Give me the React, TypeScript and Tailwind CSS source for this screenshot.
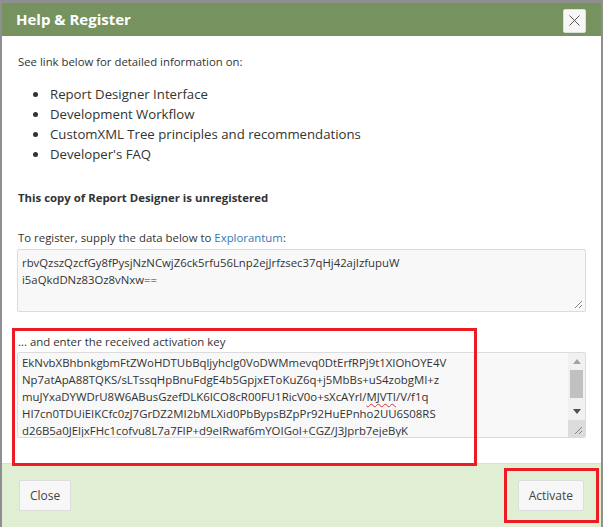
import React from "react";

const FONT = { fontFamily: '"Open Sans", "Noto Sans", Arial, sans-serif' };

const TOPICS = [
  "Report Designer Interface",
  "Development Workflow",
  "CustomXML Tree principles and recommendations",
  "Developer's FAQ",
];

const REQUEST_LINES = [
  "rbvQzszQzcfGy8fPysjNzNCwjZ6ck5rfu56Lnp2ejJrfzsec37qHj42ajIzfupuW",
  "i5aQkdDNz83Oz8vNxw==",
];

function ResizeGrip() {
  return (
    <svg width="9" height="9" viewBox="0 0 9 9" className="absolute right-[2px] bottom-[2px]">
      <line x1="1" y1="8" x2="8" y2="1" stroke="#777" strokeWidth="0.9" />
      <line x1="5" y1="8" x2="8" y2="5" stroke="#777" strokeWidth="0.9" />
    </svg>
  );
}

function Scrollbar() {
  return (
    <div className="absolute right-0 top-0 bottom-0 w-[17px] bg-[#f1f1f1] flex flex-col">
      <div className="h-[17px] flex items-center justify-center">
        <svg width="8" height="5" viewBox="0 0 8 5">
          <path d="M0 5 L4 0 L8 5 Z" fill="#a3a3a3" />
        </svg>
      </div>
      <div className="mx-[2px] h-[28px] bg-[#c1c1c1]" />
      <div className="flex-1" />
      <div className="h-[17px] flex items-center justify-center">
        <svg width="8" height="5" viewBox="0 0 8 5">
          <path d="M0 0 L4 5 L8 0 Z" fill="#505050" />
        </svg>
      </div>
      <div className="h-[17px] bg-[#dcdcdc] relative">
        <ResizeGrip />
      </div>
    </div>
  );
}

function ActivationKey() {
  return (
    <div className="relative h-[86px] bg-[#f8f8f8] border border-[#dcdcdc] rounded-[2px] overflow-hidden">
      <div className="pl-[4px] pt-[1px] text-[11.4px] leading-[17px] text-[#333] whitespace-nowrap">
        <div>EkNvbXBhbnkgbmFtZWoHDTUbBqljyhclg0VoDWMmevq0DtErfRPj9t1XIOhOYE4V</div>
        <div>Np7atApA88TQKS/sLTssqHpBnuFdgE4b5GpjxEToKuZ6q+j5MbBs+uS4zobgMI+z</div>
        <div>
          muJYxaDYWDrU8W6ABusGzefDLK6ICO8cR00FU1RicV0o+sXcAYrl/
          <span className="underline decoration-wavy decoration-[#e03030] decoration-1 underline-offset-2">
            MJVTI
          </span>
          /V/f1q
        </div>
        <div>HI7cn0TDUiEIKCfc0zJ7GrDZ2MI2bMLXid0PbBypsBZpPr92HuEPnho2UU6S08RS</div>
        <div>d26B5a0JEljxFHc1cofvu8L7a7FIP+d9eIRwaf6mYOIGoI+CGZ/J3Jprb7ejeByK</div>
      </div>
      <Scrollbar />
    </div>
  );
}

export default function App() {
  return (
    <div className="relative w-[603px] h-[527px] bg-[#8f8f8f] pt-[3px] pl-[2px] pr-[2px]" style={FONT}>
      <div className="h-full bg-white flex flex-col">
        {/* Header */}
        <div className="h-[33px] bg-[#76925f] flex items-center justify-between pl-[14px] pr-[15px]">
          <h1 className="text-white font-bold text-[15px]">Help &amp; Register</h1>
          <button className="w-[23px] h-[24px] bg-[#f7f7f7] border border-[#dddddd] rounded-[2px] flex items-center justify-center mt-[2px]">
            <svg width="11" height="11" viewBox="0 0 11 11">
              <line x1="0.5" y1="0.5" x2="10.5" y2="10.5" stroke="#555" strokeWidth="1" />
              <line x1="10.5" y1="0.5" x2="0.5" y2="10.5" stroke="#555" strokeWidth="1" />
            </svg>
          </button>
        </div>

        {/* Body */}
        <div className="px-[15px] pt-[17px] text-[#333]">
          <p className="text-[11.35px] leading-[17px] pl-[1px]">See link below for detailed information on:</p>
          <ul className="mt-[14px] pl-[16px] text-[13.2px] leading-[20px]">
            {TOPICS.map((t) => (
              <li key={t} className="flex items-center gap-[12px]">
                <span className="w-[5px] h-[5px] rounded-full bg-[#333] shrink-0" />
                {t}
              </li>
            ))}
          </ul>
          <p className="mt-[25px] text-[11.4px] leading-[17px] font-bold pl-[1px]">
            This copy of Report Designer is unregistered
          </p>
          <p className="mt-[23px] text-[11.4px] leading-[17px] pl-[1px]">
            To register, supply the data below to <span className="text-[#337ab7]">Explorantum</span>:
          </p>
          <div className="relative mt-[3px] h-[63px] bg-[#f8f8f8] border border-[#dcdcdc] rounded-[2px]">
            <div className="pl-[4px] pt-[4px] text-[11.35px] leading-[17px] whitespace-nowrap">
              {REQUEST_LINES.map((l) => (
                <div key={l}>{l}</div>
              ))}
            </div>
            <ResizeGrip />
          </div>
          <p className="mt-[21px] text-[11.4px] leading-[17px] pl-[1px]">... and enter the received activation key</p>
          <div className="mt-[2px]">
            <ActivationKey />
          </div>
        </div>

        {/* Footer */}
        <div className="mt-auto h-[64px] bg-[#e0efd4] border-t border-[#d5e5c8] flex items-start justify-between px-[17px] pt-[16px]">
          <button className="h-[31px] px-[10px] bg-[#f7f7f7] border border-[#dddddd] rounded-[2px] text-[12px] text-[#444]">
            Close
          </button>
          <button className="h-[31px] px-[10px] bg-[#f7f7f7] border border-[#dddddd] rounded-[2px] text-[12px] text-[#444]">
            Activate
          </button>
        </div>
      </div>

      {/* Highlight annotations */}
      <div className="absolute left-[12px] top-[328px] w-[465px] h-[138px] border-[3px] border-[#ed1c24]" />
      <div className="absolute left-[504px] top-[468px] w-[95px] h-[55px] border-[3px] border-[#ed1c24]" />
    </div>
  );
}
